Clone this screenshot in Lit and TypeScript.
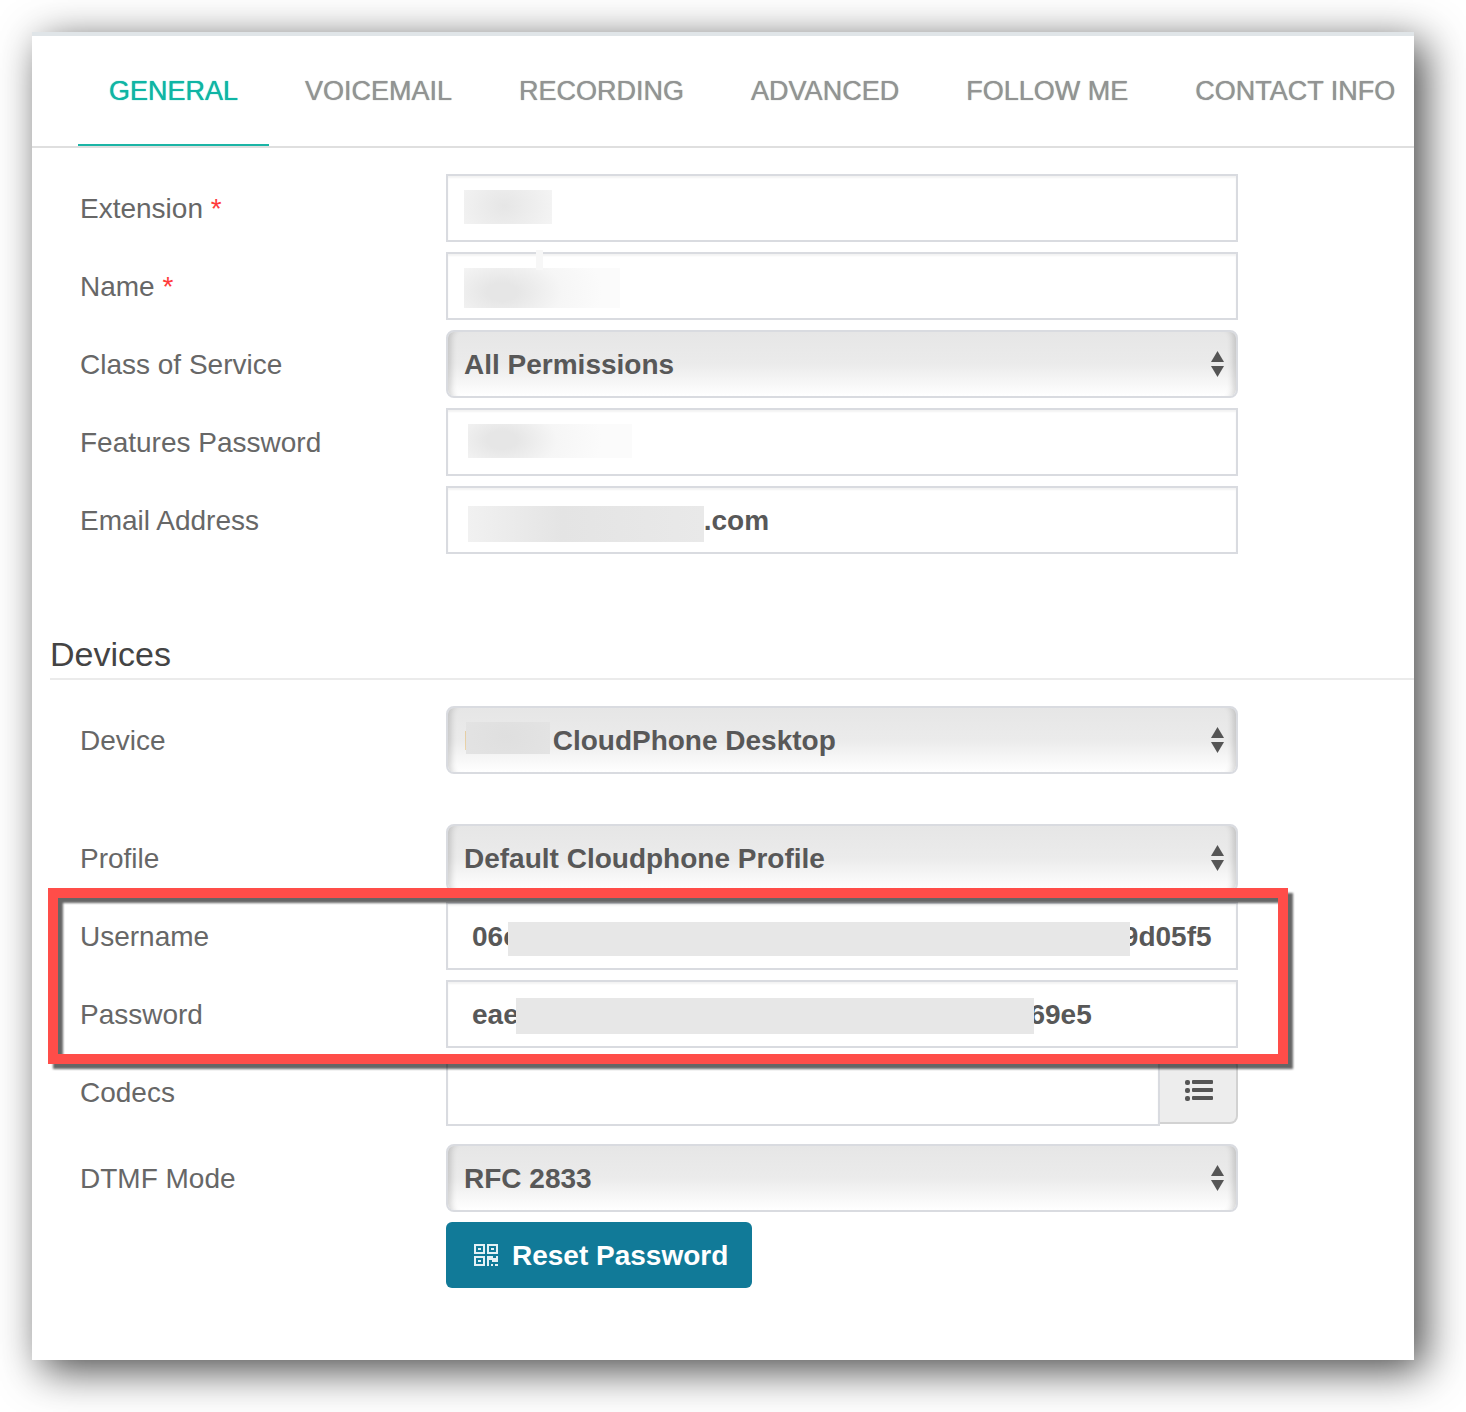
import { LitElement, html, css, svg, nothing } from "lit";
import { customElement, property, state } from "lit/decorators.js";
import { classMap } from "lit/directives/class-map.js";

const fieldStyles = css`
  :host {
    display: block;
  }
  * {
    box-sizing: border-box;
  }
  .row {
    display: grid;
    grid-template-columns: 366px minmax(0, 1fr);
    align-items: center;
  }
  .label {
    padding-top: 2px;
    color: #676767;
  }
  .required {
    color: #ff3b3b;
  }
  .control {
    position: relative;
    display: flex;
    align-items: flex-start;
  }
  .input,
  .select {
    display: block;
    flex: 1;
    min-width: 0;
    width: 100%;
    height: 68px;
    margin: 0;
    padding: 2px 16px 0;
    border: 2px solid #d9dbe0;
    border-radius: 0;
    background: #fff;
    box-shadow: inset 0 2px 2px rgba(0, 0, 0, 0.05);
    color: #585858;
    font: bold 28px/32px "Liberation Sans", Arial, sans-serif;
    outline: none;
  }
  .inset {
    padding: 2px 24px 0;
  }
  .select {
    appearance: none;
    border-radius: 8px;
    background: linear-gradient(#e6e6e6, #ebebeb 50%, #fff);
    box-shadow:
      inset 9px 0 6px -6px rgba(0, 0, 0, 0.16),
      inset -9px 0 6px -6px rgba(0, 0, 0, 0.16);
  }
  .arrows {
    position: absolute;
    right: 14px;
    top: 21px;
    width: 13px;
    height: 26px;
    pointer-events: none;
    fill: #555;
  }
  .addon {
    display: flex;
    align-items: center;
    justify-content: center;
    width: 78px;
    height: 66px;
    padding: 0;
    border: 2px solid #d2d2d2;
    border-left: 0;
    border-radius: 0 8px 8px 0;
    background: #ededed;
  }
  .list-icon {
    width: 30px;
    height: 24px;
    fill: #555;
  }
  .mask {
    position: absolute;
    pointer-events: none;
    background: #e7e7e7;
  }
  .mask-extension {
    left: 18px;
    top: 16px;
    width: 88px;
    height: 34px;
    background: radial-gradient(60px 50px at 40px 16px, #e6e6e6, #f6f6f6);
  }
  .mask-name {
    left: 18px;
    top: 16px;
    width: 156px;
    height: 40px;
    background: radial-gradient(100px 60px at 38px 24px, #e6e6e6 15%, #f6f6f6 60%, #fbfbfb);
  }
  .mask-name::before {
    content: "";
    position: absolute;
    left: 72px;
    top: -18px;
    width: 7px;
    height: 20px;
    background: #f7f7f7;
  }
  .mask-features {
    left: 22px;
    top: 16px;
    width: 164px;
    height: 34px;
    background: radial-gradient(100px 60px at 34px 16px, #e6e6e6 15%, #f6f6f6 55%, #fbfbfb);
  }
  .mask-email {
    left: 22px;
    top: 20px;
    width: 236px;
    height: 36px;
    background: linear-gradient(90deg, #f1f1f1, #e4e4e4 40%, #e9e9e9);
  }
  .mask-device {
    left: 20px;
    top: 16px;
    width: 84px;
    height: 32px;
    background: radial-gradient(70px 50px at 40px 14px, #dfdfdf, #e5e5e5);
  }
  .mask-username {
    left: 62px;
    top: 20px;
    right: 108px;
    height: 34px;
  }
  .mask-password {
    left: 70px;
    top: 18px;
    width: 518px;
    height: 36px;
  }
`;

@customElement("form-field")
class FormField extends LitElement {
  @property() label = "";
  @property() name = "";
  @property() value = "";
  @property() kind = "text";
  @property({ type: Boolean }) required = false;
  @property({ type: Boolean }) masked = false;
  @property({ type: Boolean }) inset = false;

  static styles = fieldStyles;

  private renderSelect() {
    return html`
      <select class="select" id=${this.name}>
        <option selected>${this.value}</option>
      </select>
      <svg class="arrows" viewBox="0 0 13 26" aria-hidden="true">
        ${svg`<path d="M6.500 0 13 11H0z"/><path d="M0 15h13L6.500 26z"/>`}
      </svg>
    `;
  }

  private renderInput() {
    return html`
      <input
        class=${classMap({ input: true, inset: this.inset })}
        id=${this.name}
        type="text"
        autocomplete="off"
        .value=${this.value}
      />
      ${this.kind === "picker"
        ? html`<button class="addon" type="button" aria-label="Choose codecs">
            <svg class="list-icon" viewBox="0 0 30 24" aria-hidden="true">
              <rect x="2" y="1" width="5" height="5" rx="2" />
              <rect x="2" y="9" width="5" height="5" rx="2" />
              <rect x="2" y="17" width="5" height="5" rx="2" />
              <rect x="9" y="1" width="21" height="4" rx="1" />
              <rect x="9" y="9" width="21" height="4" rx="1" />
              <rect x="9" y="17" width="21" height="4" rx="1" />
            </svg>
          </button>`
        : nothing}
    `;
  }

  render() {
    return html`
      <div class="row">
        <label class="label" for=${this.name}
          >${this.label}${this.required ? html` <span class="required">*</span>` : nothing}</label
        >
        <div class="control">
          ${this.kind === "select" ? this.renderSelect() : this.renderInput()}
          ${this.masked ? html`<span class="mask mask-${this.name}"></span>` : nothing}
        </div>
      </div>
    `;
  }
}

const TABS = ["GENERAL", "VOICEMAIL", "RECORDING", "ADVANCED", "FOLLOW ME", "CONTACT INFO"];

@customElement("app-root")
class AppRoot extends LitElement {
  @state() private active = "GENERAL";

  static styles = css`
    :host {
      display: block;
      overflow: hidden;
      padding: 32px 52px 52px 32px;
      background: #fff;
      font: 28px/32px "Liberation Sans", Arial, sans-serif;
    }
    * {
      box-sizing: border-box;
    }
    .card {
      padding-bottom: 72px;
      border-top: 4px solid #e0e5e8;
      background: #fff;
      box-shadow: 10px 10px 40px rgba(0, 0, 0, 0.73);
    }
    .tabs {
      display: flex;
      gap: 5px;
      padding-left: 46px;
      overflow: hidden;
      border-bottom: 2px solid #dfdfdf;
    }
    .tab {
      flex: none;
      padding: 37px 31px;
      border: solid transparent;
      border-width: 2px 0;
      color: #929493;
      font-size: 27px;
      font-weight: 500;
      text-decoration: none;
      text-shadow: 0 0 1px currentColor;
      white-space: nowrap;
    }
    .active {
      border-bottom-color: #1bb5a6;
      color: #0fb5a5;
    }
    .rows {
      display: flex;
      flex-direction: column;
      gap: 10px;
      padding: 26px 176px 0 48px;
    }
    .heading {
      margin: 80px 0 0 18px;
      padding-bottom: 4px;
      border-bottom: 2px solid #ebebeb;
      color: #444;
      font-size: 34px;
      font-weight: 400;
      line-height: 40px;
    }
    .spaced {
      margin-bottom: 40px;
    }
    .codecs {
      margin-bottom: 8px;
    }
    .credentials {
      position: relative;
      display: flex;
      flex-direction: column;
      gap: 10px;
    }
    .highlight {
      position: absolute;
      z-index: 1;
      inset: -14px -50px -16px -32px;
      border: 10px solid #ff4d49;
      filter: drop-shadow(5px 5px 1px rgba(0, 0, 0, 0.6));
      pointer-events: none;
    }
    .actions {
      padding-left: 366px;
    }
    .reset {
      display: inline-flex;
      align-items: center;
      gap: 14px;
      height: 66px;
      padding: 2px 24px 0;
      border: 0;
      border-radius: 6px;
      background: #117a98;
      color: #fff;
      font: bold 28px/32px "Liberation Sans", Arial, sans-serif;
      white-space: nowrap;
    }
    .qr {
      width: 28px;
      height: 26px;
      fill: #e4f1f5;
    }
  `;

  render() {
    return html`
      <main class="card">
        <nav class="tabs">
          ${TABS.map(
            (tab) => html`<a
              class=${classMap({ tab: true, active: tab === this.active })}
              href="#${tab.toLowerCase().replace(" ", "-")}"
              @click=${() => (this.active = tab)}
              >${tab}</a
            >`,
          )}
        </nav>
        <form>
          <div class="rows">
            <form-field label="Extension" name="extension" required masked></form-field>
            <form-field label="Name" name="name" required masked></form-field>
            <form-field label="Class of Service" name="service" kind="select" value="All Permissions"></form-field>
            <form-field label="Features Password" name="features" masked></form-field>
            <form-field label="Email Address" name="email" masked value="  00000bbbb00000.com"></form-field>
          </div>
          <h2 class="heading">Devices</h2>
          <div class="rows">
            <form-field
              class="spaced"
              label="Device"
              name="device"
              kind="select"
              masked
              value="Brand CloudPhone Desktop"
            ></form-field>
            <form-field label="Profile" name="profile" kind="select" value="Default Cloudphone Profile"></form-field>
            <div class="credentials">
              <form-field
                label="Username"
                name="username"
                inset
                masked
                value=${"06c" + "0".repeat(36) + "fbb" + "9d05f5"}
              ></form-field>
              <form-field
                label="Password"
                name="password"
                inset
                masked
                value=${"eae" + "0".repeat(30) + "fbb" + "69e5"}
              ></form-field>
              <div class="highlight"></div>
            </div>
            <form-field class="codecs" label="Codecs" name="codecs" kind="picker"></form-field>
            <form-field label="DTMF Mode" name="dtmf" kind="select" value="RFC 2833"></form-field>
            <div class="actions">
              <button class="reset" type="button">
                <svg class="qr" viewBox="0 0 28 26" aria-hidden="true">
                  <path
                    fill-rule="evenodd"
                    d="M4 1h11v10H4zM6 3v6h7V3zM17 1h11v10H17zM19 3v6h7V3zM4 13h11v10H4zM6 15v6h7v-6z"
                  />
                  <path d="M8 5h3v2H8zM21 5h3v2h-3zM8 17h3v2H8z" />
                  <path d="M17 13h6v2h3v-2h2v6h-6v-2h-3v6h-2zM21 21h2v2h-2zM25 21h3v2h-3z" />
                </svg>
                Reset Password
              </button>
            </div>
          </div>
        </form>
      </main>
    `;
  }
}
